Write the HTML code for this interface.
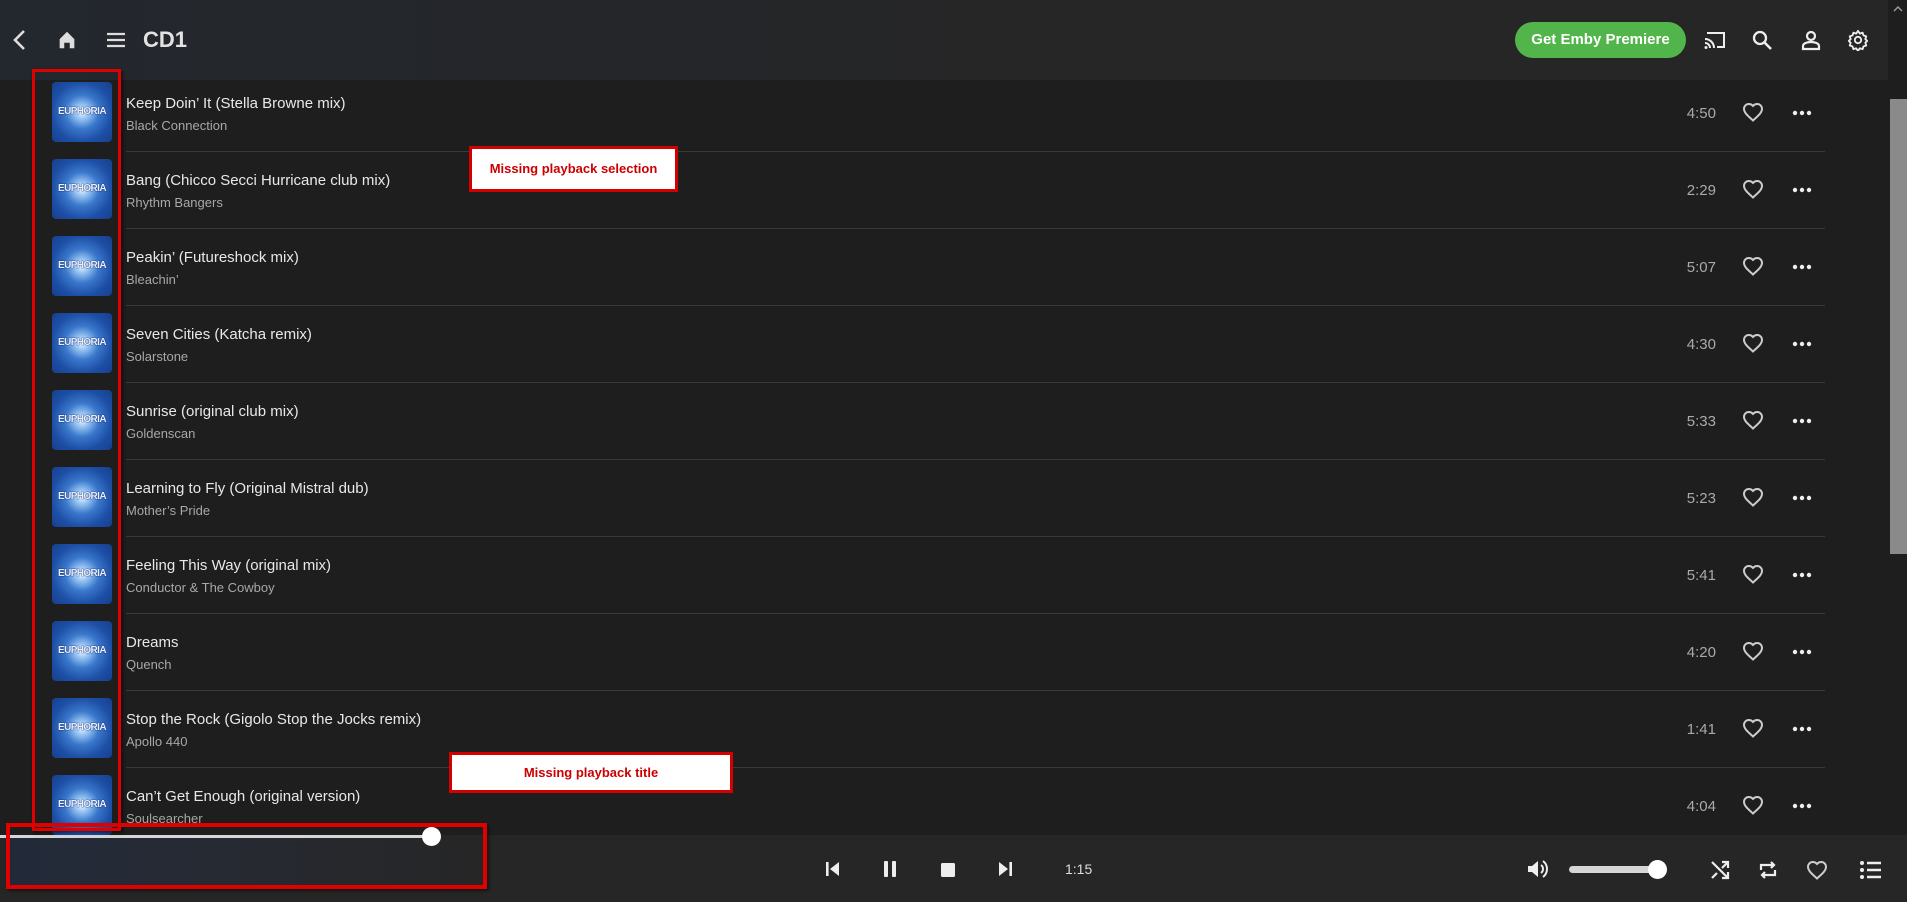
<!DOCTYPE html>
<html><head><meta charset="utf-8"><style>
*{margin:0;padding:0;box-sizing:border-box}
body{width:1907px;height:902px;overflow:hidden;background:#1e1e1e;font-family:"Liberation Sans",sans-serif;position:relative;color:#e6e6e6}
.hdr{position:absolute;left:0;top:0;width:1888px;height:80px;background:linear-gradient(90deg,#23272e 0%,#262626 60%,#262626 100%)}
.abs{position:absolute}
.sb{position:absolute;left:1888px;top:0;width:19px;height:835px;background:#1e1e1e}
.thumb{position:absolute;left:1890px;top:99px;width:17px;height:455px;background:#8a8a8a}
.row{position:absolute;left:0;width:1888px;height:77px}
.art{position:absolute;left:52px;top:2px;width:60px;height:60px;border-radius:4px;background:radial-gradient(circle at 50% 50%,#f4f9ff 0%,#9cc8f4 15%,#3a78cc 40%,#1d4fa6 70%,#173f8c 100%);overflow:hidden}
.art span{position:absolute;left:0;right:0;top:24px;text-align:center;font-size:10px;font-weight:bold;color:#e8f0ff;letter-spacing:-0.6px;text-shadow:0 0 1px #0a2060,0 0 1px #0a2060}
.t{position:absolute;left:126px;top:15px;font-size:15px;color:#e8e8e8;white-space:nowrap}
.a{position:absolute;left:126px;top:38px;font-size:13px;color:#a8a8a8;white-space:nowrap}
.sep{position:absolute;left:126px;top:71px;width:1699px;height:1px;background:#3a3a3a}
.d{position:absolute;right:172px;top:25px;font-size:15px;color:#aaa;text-align:right}
.note{position:absolute;background:#fff;border:3px solid #d40000;color:#c00;font-size:13px;font-weight:bold;text-align:center}
.foot{position:absolute;left:0;top:835px;width:1907px;height:67px;background:#262626}
</style></head><body>
<div class="hdr"></div>
<svg class="abs" style="left:10px;top:28px" width="20" height="24" viewBox="0 0 20 24"><path d="M14 3 L5 12 L14 21" stroke="#ddd" stroke-width="2.6" fill="none"/></svg>
<svg class="abs" style="left:56px;top:29px" width="22" height="22" viewBox="0 0 24 24"><path d="M4 11 L12 3 L20 11 V21 H15 V15 H9 V21 H4Z" fill="#ddd"/></svg>
<svg class="abs" style="left:105px;top:30px" width="22" height="20" viewBox="0 0 22 20"><path d="M2 4H20M2 10H20M2 16H20" stroke="#ddd" stroke-width="2.2"/></svg>
<div class="abs" style="left:143px;top:27px;font-size:22px;font-weight:bold;color:#e2e2e2">CD1</div>
<div class="abs" style="left:1515px;top:22px;width:171px;height:36px;border-radius:18px;background:#52b54b;color:#fff;font-weight:bold;font-size:15px;line-height:36px;text-align:center">Get Emby Premiere</div>
<svg class="abs" style="left:1703px;top:30px" width="24" height="20" viewBox="0 0 24 20"><path d="M4 3H21V17H14" stroke="#eee" stroke-width="2" fill="none"/><path d="M2 9a9 9 0 0 1 9 9M2 13a5 5 0 0 1 5 5" stroke="#eee" stroke-width="2" fill="none"/><circle cx="3" cy="17.5" r="1.5" fill="#eee"/></svg>
<svg class="abs" style="left:1751px;top:29px" width="22" height="22" viewBox="0 0 22 22"><circle cx="9" cy="9" r="6" stroke="#eee" stroke-width="2.3" fill="none"/><path d="M13.5 13.5L20 20" stroke="#eee" stroke-width="2.6"/></svg>
<svg class="abs" style="left:1800px;top:29px" width="22" height="22" viewBox="0 0 22 22"><circle cx="11" cy="7" r="4" stroke="#eee" stroke-width="2.2" fill="none"/><path d="M3 20V17c0-3 5-4 8-4s8 1 8 4v3Z" stroke="#eee" stroke-width="2.2" fill="none"/></svg>
<svg class="abs" style="left:1847px;top:29px" width="22" height="22" viewBox="0 0 24 24"><path d="M12 2l2 3 3-1 1 3 3 1-1 3 2 2-2 2 1 3-3 1-1 3-3-1-2 3-2-3-3 1-1-3-3-1 1-3-2-2 2-2-1-3 3-1 1-3 3 1z" stroke="#eee" stroke-width="2" fill="none" stroke-linejoin="round"/><circle cx="12" cy="12" r="3.5" stroke="#eee" stroke-width="2" fill="none"/></svg>

<div class="sb"></div><div class="thumb"></div>
<svg class="abs" style="left:1892px;top:4px" width="12" height="8" viewBox="0 0 12 8"><path d="M2 7L6 3L10 7" stroke="#999" stroke-width="1.5" fill="none"/></svg>

<div class="row" style="top:80px"><div class="art"><span>EUPHORIA</span></div><div class="t">Keep Doin’ It (Stella Browne mix)</div><div class="a">Black Connection</div><div class="d">4:50</div><div class="sep"></div></div>
<div class="row" style="top:157px"><div class="art"><span>EUPHORIA</span></div><div class="t">Bang (Chicco Secci Hurricane club mix)</div><div class="a">Rhythm Bangers</div><div class="d">2:29</div><div class="sep"></div></div>
<div class="row" style="top:234px"><div class="art"><span>EUPHORIA</span></div><div class="t">Peakin’ (Futureshock mix)</div><div class="a">Bleachin’</div><div class="d">5:07</div><div class="sep"></div></div>
<div class="row" style="top:311px"><div class="art"><span>EUPHORIA</span></div><div class="t">Seven Cities (Katcha remix)</div><div class="a">Solarstone</div><div class="d">4:30</div><div class="sep"></div></div>
<div class="row" style="top:388px"><div class="art"><span>EUPHORIA</span></div><div class="t">Sunrise (original club mix)</div><div class="a">Goldenscan</div><div class="d">5:33</div><div class="sep"></div></div>
<div class="row" style="top:465px"><div class="art"><span>EUPHORIA</span></div><div class="t">Learning to Fly (Original Mistral dub)</div><div class="a">Mother’s Pride</div><div class="d">5:23</div><div class="sep"></div></div>
<div class="row" style="top:542px"><div class="art"><span>EUPHORIA</span></div><div class="t">Feeling This Way (original mix)</div><div class="a">Conductor &amp; The Cowboy</div><div class="d">5:41</div><div class="sep"></div></div>
<div class="row" style="top:619px"><div class="art"><span>EUPHORIA</span></div><div class="t">Dreams</div><div class="a">Quench</div><div class="d">4:20</div><div class="sep"></div></div>
<div class="row" style="top:696px"><div class="art"><span>EUPHORIA</span></div><div class="t">Stop the Rock (Gigolo Stop the Jocks remix)</div><div class="a">Apollo 440</div><div class="d">1:41</div><div class="sep"></div></div>
<div class="row" style="top:773px"><div class="art"><span>EUPHORIA</span></div><div class="t">Can’t Get Enough (original version)</div><div class="a">Soulsearcher</div><div class="d">4:04</div></div>

<svg width="0" height="0" style="position:absolute"><defs>
<symbol id="h" viewBox="0 0 24 24"><path d="M12 20.5l-1.3-1.2C6 15 3 12.3 3 8.9 3 6.2 5.1 4 7.8 4c1.6 0 3.1.7 4.2 1.9C13.1 4.7 14.6 4 16.2 4 18.9 4 21 6.2 21 8.9c0 3.4-3 6.1-7.7 10.4z" stroke="#ccc" stroke-width="2" fill="none"/></symbol>
<symbol id="o" viewBox="0 0 20 6"><circle cx="3" cy="3" r="2.2" fill="#eee"/><circle cx="10" cy="3" r="2.2" fill="#eee"/><circle cx="17" cy="3" r="2.2" fill="#eee"/></symbol>
</defs></svg>
<svg class="abs" style="left:1741px;top:100px" width="24" height="24"><use href="#h"/></svg><svg class="abs" style="left:1792px;top:110px" width="20" height="6"><use href="#o"/></svg>
<svg class="abs" style="left:1741px;top:177px" width="24" height="24"><use href="#h"/></svg><svg class="abs" style="left:1792px;top:187px" width="20" height="6"><use href="#o"/></svg>
<svg class="abs" style="left:1741px;top:254px" width="24" height="24"><use href="#h"/></svg><svg class="abs" style="left:1792px;top:264px" width="20" height="6"><use href="#o"/></svg>
<svg class="abs" style="left:1741px;top:331px" width="24" height="24"><use href="#h"/></svg><svg class="abs" style="left:1792px;top:341px" width="20" height="6"><use href="#o"/></svg>
<svg class="abs" style="left:1741px;top:408px" width="24" height="24"><use href="#h"/></svg><svg class="abs" style="left:1792px;top:418px" width="20" height="6"><use href="#o"/></svg>
<svg class="abs" style="left:1741px;top:485px" width="24" height="24"><use href="#h"/></svg><svg class="abs" style="left:1792px;top:495px" width="20" height="6"><use href="#o"/></svg>
<svg class="abs" style="left:1741px;top:562px" width="24" height="24"><use href="#h"/></svg><svg class="abs" style="left:1792px;top:572px" width="20" height="6"><use href="#o"/></svg>
<svg class="abs" style="left:1741px;top:639px" width="24" height="24"><use href="#h"/></svg><svg class="abs" style="left:1792px;top:649px" width="20" height="6"><use href="#o"/></svg>
<svg class="abs" style="left:1741px;top:716px" width="24" height="24"><use href="#h"/></svg><svg class="abs" style="left:1792px;top:726px" width="20" height="6"><use href="#o"/></svg>
<svg class="abs" style="left:1741px;top:793px" width="24" height="24"><use href="#h"/></svg><svg class="abs" style="left:1792px;top:803px" width="20" height="6"><use href="#o"/></svg>

<div class="foot"></div>
<div class="abs" style="left:6px;top:835px;width:480px;height:53px;background:linear-gradient(90deg,#222a3a 0%,#262a33 40%,#262626 100%)"></div>
<div class="abs" style="left:0;top:835px;width:432px;height:3px;background:#d6d6d6"></div>
<div class="abs" style="left:422px;top:827px;width:19px;height:19px;border-radius:50%;background:#fff"></div>

<svg class="abs" style="left:823px;top:860px" width="20" height="18" viewBox="0 0 20 18"><rect x="3" y="2" width="2.6" height="14" fill="#eee"/><path d="M16 2V16L7 9Z" fill="#eee"/></svg>
<svg class="abs" style="left:880px;top:860px" width="20" height="18" viewBox="0 0 20 18"><rect x="4" y="1" width="4" height="16" rx="1" fill="#eee"/><rect x="12" y="1" width="4" height="16" rx="1" fill="#eee"/></svg>
<svg class="abs" style="left:939px;top:861px" width="18" height="18" viewBox="0 0 18 18"><rect x="2" y="2" width="14" height="14" rx="1.5" fill="#eee"/></svg>
<svg class="abs" style="left:995px;top:860px" width="20" height="18" viewBox="0 0 20 18"><path d="M4 2V16L13 9Z" fill="#eee"/><rect x="14.4" y="2" width="2.6" height="14" fill="#eee"/></svg>
<div class="abs" style="left:1065px;top:861px;font-size:14px;color:#ddd">1:15</div>

<svg class="abs" style="left:1526px;top:858px" width="24" height="22" viewBox="0 0 24 22"><path d="M2 8H6L12 3V19L6 14H2Z" fill="#eee"/><path d="M15 7a5 5 0 0 1 0 8M17 3a10 10 0 0 1 0 16" stroke="#eee" stroke-width="2" fill="none"/></svg>
<div class="abs" style="left:1569px;top:866px;width:90px;height:7px;border-radius:4px;background:#d6d6d6"></div>
<div class="abs" style="left:1648px;top:860px;width:19px;height:19px;border-radius:50%;background:#fff"></div>
<svg class="abs" style="left:1709px;top:859px" width="22" height="22" viewBox="0 0 22 22"><path d="M3 3L19 19M13 19H19V13M19 3L13 9M13 3H19V9M3 19L8 14" stroke="#eee" stroke-width="2.2" fill="none"/></svg>
<svg class="abs" style="left:1757px;top:859px" width="22" height="22" viewBox="0 0 22 22"><path d="M4 11V6H17M14 3L17 6L14 9M18 11V16H5M8 13L5 16L8 19" stroke="#eee" stroke-width="2.2" fill="none"/></svg>
<svg class="abs" style="left:1805px;top:858px" width="24" height="24"><use href="#h"/></svg>
<svg class="abs" style="left:1859px;top:859px" width="24" height="22" viewBox="0 0 24 22"><circle cx="3" cy="4" r="2" fill="#eee"/><circle cx="3" cy="11" r="2" fill="#eee"/><circle cx="3" cy="18" r="2" fill="#eee"/><path d="M8 4H22M8 11H22M8 18H22" stroke="#eee" stroke-width="2.4"/></svg>

<div class="abs" style="left:32px;top:69px;width:89px;height:762px;border:3px solid #e00000;box-shadow:2px 2px 3px rgba(0,0,0,.5)"></div>
<div class="abs" style="left:6px;top:823px;width:481px;height:66px;border:4px solid #e00000;box-shadow:2px 2px 3px rgba(0,0,0,.5)"></div>
<div class="note" style="left:469px;top:146px;width:209px;height:46px;line-height:40px">Missing playback selection</div>
<div class="note" style="left:449px;top:752px;width:284px;height:41px;line-height:35px">Missing playback title</div>
</body></html>
